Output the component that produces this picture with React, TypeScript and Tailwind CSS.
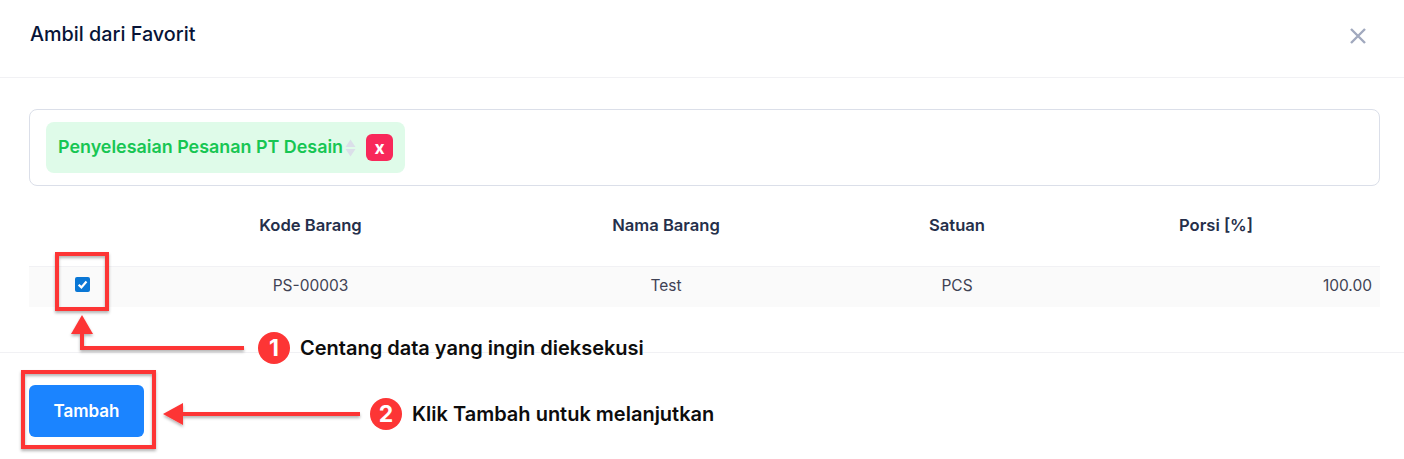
export default function App() {
  const rowGrid = "grid grid-cols-[108px_347px_364px_218px_314px] items-center";
  return (
    <div className="relative w-[1404px] h-[459px] overflow-hidden bg-white font-['Inter',sans-serif] text-[#071437]">
      <header className="h-[78px] border-b border-[#f1f1f4] flex items-start justify-between pl-[30px] pr-[37px]">
        <h2 className="mt-[21px] text-[19.8px] leading-[27px] font-medium text-[#071437]">Ambil dari Favorit</h2>
        <svg className="mt-[27px]" width="18" height="18" viewBox="0 0 18 18" fill="none" stroke="#a1a9be" strokeWidth="2.4">
          <path d="M2 2 L16 16 M16 2 L2 16" />
        </svg>
      </header>

      <main className="h-[274px] px-[29px] pt-[31px] pr-[24px]">
        <div className="h-[77px] border border-[#dbdfe9] rounded-[8px] pl-[16px] pt-[12px]">
          <div className="w-[359px] h-[51px] rounded-[8px] bg-[#dffbe9] flex items-center pl-[12px]">
            <span className="text-[17.9px] font-semibold text-[#17c653] whitespace-nowrap">Penyelesaian Pesanan PT Desain</span>
            <svg className="ml-[2px]" width="11" height="18" viewBox="0 0 11 18" fill="#dbdfe9">
              <path d="M5.5 0.5 L10.5 8 H0.5 Z M5.5 17.5 L0.5 10 H10.5 Z" />
            </svg>
            <span className="ml-[10px] w-[27px] h-[27px] rounded-[6px] bg-[#f8285a] flex items-center justify-center text-white text-[17.5px] leading-[24px] font-bold">x</span>
          </div>
        </div>

        <div className={`${rowGrid} h-[80px] pb-[2px] text-[16.6px] font-semibold text-[#252f4a]`}>
          <span />
          <span className="text-center">Kode Barang</span>
          <span className="text-center">Nama Barang</span>
          <span className="text-center">Satuan</span>
          <span className="text-center pr-[14px]">Porsi [%]</span>
        </div>

        <div className={`${rowGrid} h-[41px] pb-[3px] bg-[#fafafa] border-t border-[#f1f1f4] text-[15.5px] text-[#3f4254] w-[1351px]`}>
          <span className="flex justify-center pb-[3px] pr-[1px]">
            <span className="w-[15px] h-[15px] rounded-[2px] bg-[#0a77d5] flex items-center justify-center">
              <svg width="11" height="11" viewBox="0 0 10 10" fill="none" stroke="white" strokeWidth="2">
                <path d="M1.5 5.2 L4 7.6 L8.6 2.2" />
              </svg>
            </span>
          </span>
          <span className="text-center">PS-00003</span>
          <span className="text-center">Test</span>
          <span className="text-center">PCS</span>
          <span className="text-right pr-[8px]">100.00</span>
        </div>
      </main>

      <footer className="h-[107px] border-t border-[#f1f1f4] pl-[29px] pt-[32px]">
        <button className="w-[115px] h-[52px] pt-[1px] rounded-[6px] bg-[#1b84ff] text-white text-[17px] font-semibold">Tambah</button>
      </footer>

      {/* Annotation overlay */}
      <svg className="absolute left-0 top-0 pointer-events-none" width="1404" height="459" viewBox="0 0 1404 459" fill="none">
        <defs>
          <filter id="sh" x="-10%" y="-50%" width="120%" height="200%">
            <feDropShadow dx="0" dy="2" stdDeviation="1.5" floodColor="#000" floodOpacity="0.3" />
          </filter>
        </defs>
        <g filter="url(#sh)">
          <rect x="57" y="254" width="50" height="55" stroke="#fd3535" strokeWidth="4" />
          <rect x="23" y="372" width="131" height="75" stroke="#fd3535" strokeWidth="4" />
          <path d="M244 348 H82 V332" stroke="#fd3535" strokeWidth="4" />
          <path d="M82 315 L93 334 H71 Z" fill="#fd3535" />
          <path d="M360 414 H180" stroke="#fd3535" strokeWidth="4" />
          <path d="M163 414 L183 403 V425 Z" fill="#fd3535" />
        </g>
      </svg>

      <div className="absolute left-[258px] top-[332px] w-[32px] h-[32px] rounded-full bg-[#fd3535] flex items-center justify-center text-white text-[23px] font-bold">1</div>
      <div className="absolute left-[300px] top-[335px] text-[20px] leading-[26px] font-semibold text-[#0d0d0d] whitespace-nowrap">Centang data yang ingin dieksekusi</div>
      <div className="absolute left-[370px] top-[398px] w-[32px] h-[32px] rounded-full bg-[#fd3535] flex items-center justify-center text-white text-[23px] font-bold">2</div>
      <div className="absolute left-[412px] top-[401px] text-[20px] leading-[26px] font-semibold text-[#0d0d0d] whitespace-nowrap">Klik Tambah untuk melanjutkan</div>
    </div>
  );
}
